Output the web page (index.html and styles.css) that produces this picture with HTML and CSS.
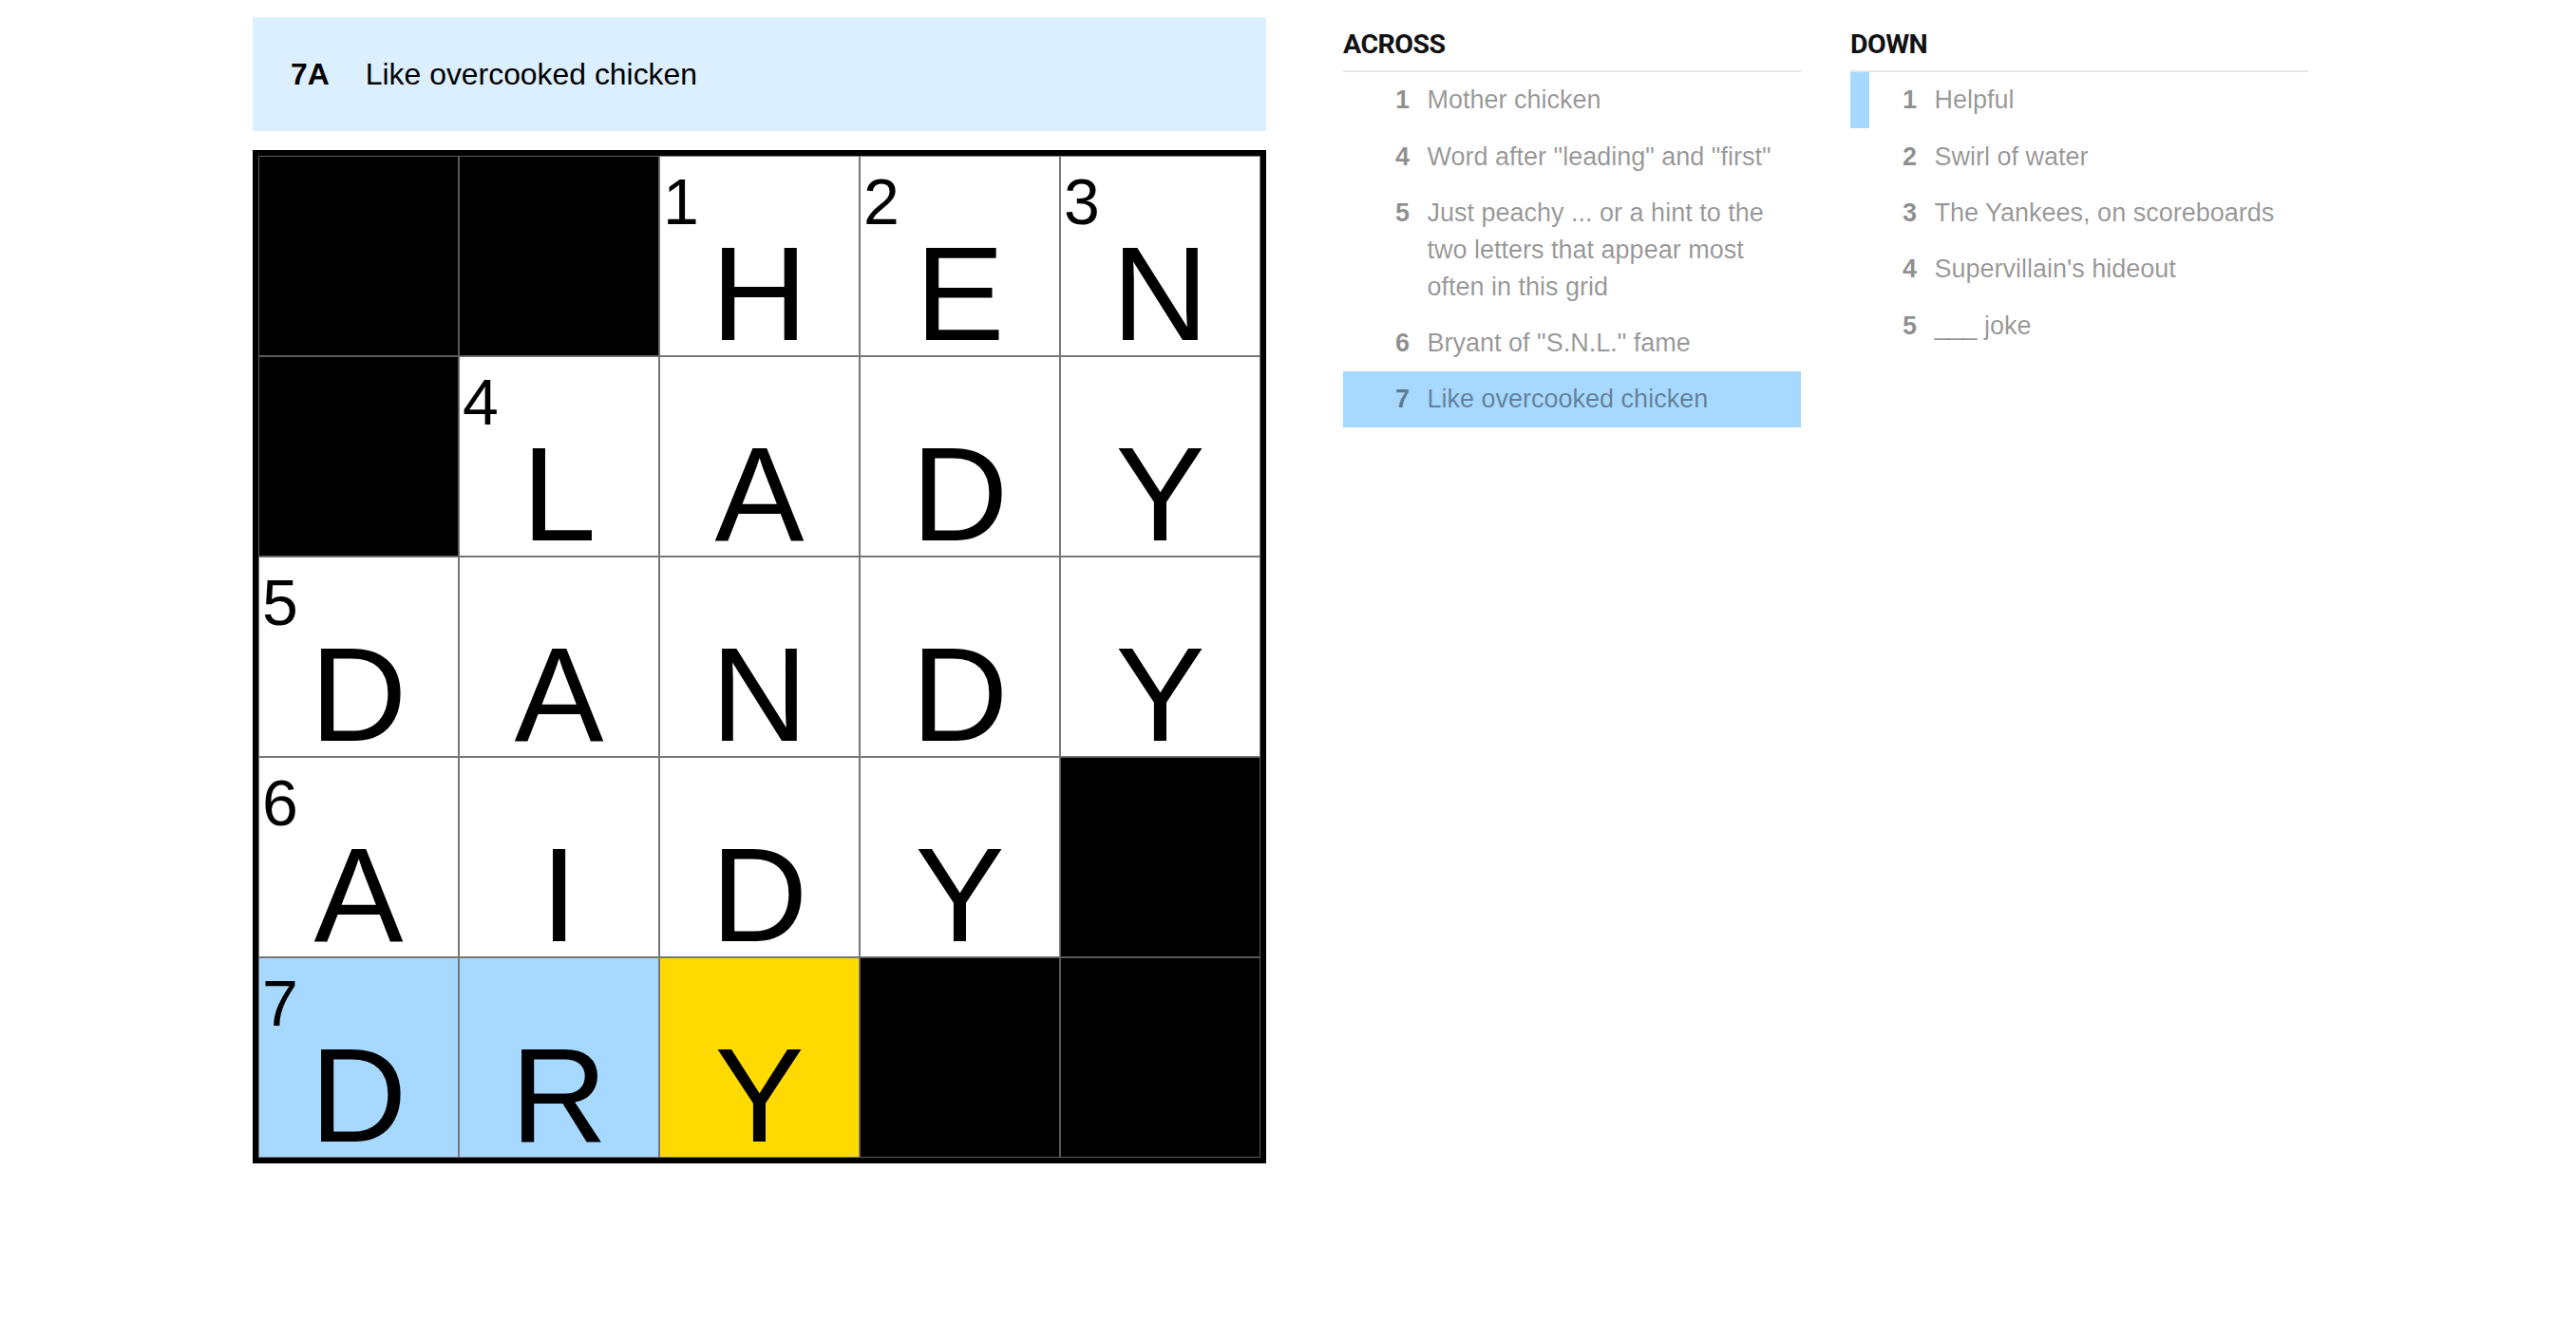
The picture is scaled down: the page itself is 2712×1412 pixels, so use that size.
FILE: index.html
```html
<!DOCTYPE html>
<html lang="en">
<head>
  <meta charset="UTF-8" />
  <title>The Mini Crossword</title>
  <meta name="viewport" content="width=device-width, initial-scale=1" />
  <link rel="stylesheet" href="styles.css">
</head>
<body>

  <div class="app">
    <section class="board-col">
      <div class="clue-bar">
        <span class="clue-bar-num">7A</span>
        <span class="clue-bar-text">Like overcooked chicken</span>
      </div>
      <div class="board" id="board"></div>
    </section>

    <section class="clue-list">
      <h3>Across</h3>
      <ol>
        <li class="clue"><span class="num">1</span><span class="text">Mother chicken</span></li>
        <li class="clue"><span class="num">4</span><span class="text">Word after "leading" and "first"</span></li>
        <li class="clue"><span class="num">5</span><span class="text">Just peachy ... or a hint to the two letters that appear most often in this grid</span></li>
        <li class="clue"><span class="num">6</span><span class="text">Bryant of "S.N.L." fame</span></li>
        <li class="clue selected"><span class="num">7</span><span class="text">Like overcooked chicken</span></li>
      </ol>
    </section>

    <section class="clue-list">
      <h3>Down</h3>
      <ol>
        <li class="clue crossing"><span class="num">1</span><span class="text">Helpful</span></li>
        <li class="clue"><span class="num">2</span><span class="text">Swirl of water</span></li>
        <li class="clue"><span class="num">3</span><span class="text">The Yankees, on scoreboards</span></li>
        <li class="clue"><span class="num">4</span><span class="text">Supervillain's hideout</span></li>
        <li class="clue"><span class="num">5</span><span class="text">___ joke</span></li>
      </ol>
    </section>
  </div>

  <script>
    // "#" = black square, a number in front of the letter = clue label
    const rows = [
      ["#", "#", "1H", "2E", "3N"],
      ["#", "4L", "A", "D", "Y"],
      ["5D", "A", "N", "D", "Y"],
      ["6A", "I", "D", "Y", "#"],
      ["7D", "R", "Y", "#", "#"],
    ];

    const board = document.getElementById("board");

    rows.forEach((row, r) => {
      row.forEach((val, c) => {
        const cell = document.createElement("div");
        cell.className = "cell";

        if (val === "#") {
          cell.classList.add("block");
        } else {
          const label = val.slice(0, -1);
          const letter = val.slice(-1);
          if (r === 4 && c < 2) cell.classList.add("word");
          if (r === 4 && c === 2) cell.classList.add("active");
          cell.innerHTML = (label ? `<span class="label">${label}</span>` : "") +
            `<span class="letter">${letter}</span>`;
        }
        board.appendChild(cell);
      });
    });
  </script>
</body>
</html>
```

FILE: styles.css
```css
:root {
  --ink: #000000;
  --bar: #dcefff;
  --word: #a7d8ff;
  --active: #ffda00;
  --cell-line: #777777;
  --rule: #e6e6e6;
}

body {
  margin: 0;
  background: #ffffff;
  color: var(--ink);
  font-family: "Liberation Sans", Arial, sans-serif;
}

.app {
  display: flex;
  align-items: flex-start;
  padding: 18px 0 0 266px;
}

/* ---- board ---- */

.board-col {
  width: 1067px;
  flex-shrink: 0;
  margin-right: 81px;
}

.clue-bar {
  height: 120px;
  background: var(--bar);
  display: flex;
  align-items: center;
  padding-left: 40px;
  font-size: 31.9px;
  margin-bottom: 20px;
}

.clue-bar-num {
  font-weight: bold;
  margin-right: 38px;
}

.board {
  width: 1067px;
  height: 1067px;
  box-sizing: border-box;
  border: 6px solid #000;
  display: grid;
  grid-template-columns: repeat(5, 211px);
  grid-template-rows: repeat(5, 211px);
}

.cell {
  position: relative;
  box-sizing: border-box;
  border: 1px solid var(--cell-line);
  background: #fff;
  text-align: center;
  padding-top: 73.6px;
}

.cell.block {
  background: #000;
  border-color: #5a5a5a;
}

.cell.word {
  background: var(--word);
}

.cell.active {
  background: var(--active);
}

.label {
  position: absolute;
  top: 13px;
  left: 3px;
  font-size: 68px;
  line-height: 1;
}

.letter {
  display: block;
  font-size: 141px;
  line-height: 141px;
}

/* ---- clue lists ---- */

.clue-list {
  width: 482px;
  flex-shrink: 0;
  margin-right: 52px;
}

.clue-list h3 {
  margin: 0;
  padding: 15px 0 13px;
  border-bottom: 2px solid var(--rule);
  font-family: Roboto, "Liberation Sans", sans-serif;
  font-size: 28.5px;
  line-height: 28px;
  font-weight: bold;
  letter-spacing: -0.5px;
  text-transform: uppercase;
  color: #121212;
}

.clue-list ol {
  list-style: none;
  margin: 0;
  padding: 0;
}

.clue {
  display: flex;
  padding: 10.25px 20px 10.25px 55px;
  font-size: 27px;
  line-height: 38.85px;
}

.clue .num {
  flex-shrink: 0;
  width: 15px;
  margin-right: 18.5px;
  text-align: right;
  font-weight: bold;
  color: rgba(0, 0, 0, 0.46);
}

.clue .text {
  color: rgba(0, 0, 0, 0.42);
}

.clue.selected {
  background: var(--word);
}

.clue.crossing {
  border-left: 20px solid var(--word);
  padding-left: 35px;
}
```
